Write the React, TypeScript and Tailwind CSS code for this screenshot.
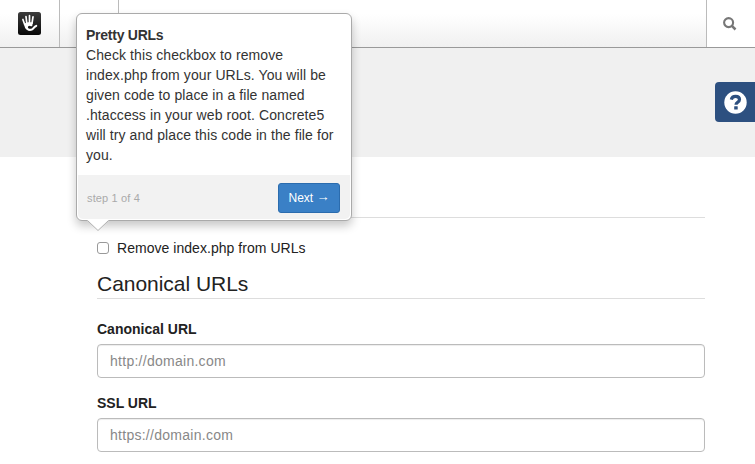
import React from "react";

function HandLogo() {
  return (
    <svg width="23" height="23" viewBox="0 0 23 23" aria-label="Dashboard">
      <defs>
        <linearGradient id="tile" x1="0" y1="0" x2="0" y2="1">
          <stop offset="0" stopColor="#3d3d3d" />
          <stop offset="1" stopColor="#080808" />
        </linearGradient>
      </defs>
      <rect width="23" height="23" rx="2.5" fill="url(#tile)" />
      <g fill="none" stroke="#fff" strokeLinecap="round">
        <path strokeWidth="1.7" d="M4.900 7.500 6.700 12.500M8 4.500l.8 7M11.500 3.700v7.500M15 4.900l-1 6.500" />
        <path
          strokeWidth="2.1"
          d="M13.300 13.200c-2-.9-4.300-.2-4.500 1.700-.1 2.500 2.400 3.500 5 2.600 1.900-.8 2.200-3 4.400-3.600"
        />
      </g>
      <path
        fill="#fff"
        d="M5.900 12c1.900-1.700 6.100-2.100 8.900-1.300l-.7 2.700c-2-.5-4.300-.1-4.700 1.800-.2 1.500.5 2.500 2 3.200-2.500-.2-4.300-1.600-4.700-3.600z"
      />
    </svg>
  );
}

function SearchIcon() {
  return (
    <svg width="14" height="14" viewBox="0 0 14 14" fill="none" stroke="#777" aria-label="Search">
      <circle cx="5.600" cy="5.600" r="4.500" strokeWidth="2.100" />
      <path d="m8.900 8.900 3.600 3.600" strokeWidth="2.500" />
    </svg>
  );
}

function Toolbar() {
  return (
    <header className="flex h-12 border-b border-[#999] bg-linear-to-b from-white from-30% to-[#f0f0f0]">
      <div className="flex w-[60px] justify-center border-r border-[#bbb] pt-3">
        <HandLogo />
      </div>
      <div className="w-[59px] border-r border-[#bbb]" />
      <div className="ml-auto flex w-[49px] border-l border-[#bbb] bg-white pt-[17px] pl-4">
        <SearchIcon />
      </div>
    </header>
  );
}

function HelpButton() {
  return (
    <button className="absolute top-[82px] right-0 flex h-10 w-10 items-center justify-center rounded-l-[4px] bg-[#2d5080]">
      <svg width="23" height="23" viewBox="0 0 23 23" aria-label="Help">
        <circle cx="11.5" cy="11.5" r="11.2" fill="#fff" />
        <path
          d="M7.300 8.600c.5-2.200 2-3.200 4.300-3.200 2.300 0 3.900 1.300 3.900 3.200 0 2.700-3.500 2.700-3.500 5.200"
          fill="none"
          stroke="#2d5080"
          strokeWidth="3.200"
        />
        <rect x="10.200" y="15.200" width="3.500" height="3.300" rx=".3" fill="#2d5080" />
      </svg>
    </button>
  );
}

function Tour() {
  return (
    <div className="absolute top-[13px] left-[76px] w-[276px] rounded-[6px] border border-[#aaa] bg-white shadow-[0_5px_10px_rgba(0,0,0,0.22)]">
      <div className="h-[161px] px-[9px] pt-[11px] text-[14px] leading-5 text-[#333]">
        <strong className="block tracking-[-0.25px]">Pretty URLs</strong>
        <p className="tracking-[0.09px] whitespace-nowrap">
          Check this checkbox to remove
          <br />
          index.php from your URLs. You will be
          <br />
          given code to place in a file named
          <br />
          .htaccess in your web root. Concrete5
          <br />
          will try and place this code in the file for
          <br />
          you.
        </p>
      </div>
      <div className="mx-px mb-px flex h-11 items-center justify-between rounded-b-[5px] bg-[#f2f2f2] pr-[10px] pl-[9px]">
        <span className="mt-[3px] text-[11px] tracking-[0.15px] text-[#aaa]">step 1 of 4</span>
        <button className="mt-[1px] flex h-[30px] w-[62px] items-center justify-center rounded-[3px] border border-[#2b6cae] bg-[#3a80c6] text-[12px] whitespace-nowrap text-white">
          Next&nbsp;<span className="-mt-px text-[13px]">→</span>
        </button>
      </div>
      <svg className="absolute top-[205px] left-[10px]" width="22" height="12" viewBox="0 0 22 12">
        <path d="M0 0h22v1L11 11.500 0 1z" fill="#fff" />
        <path d="M.5 1.500 11 11.500 21.500 1.500" fill="none" stroke="#aaa" strokeWidth=".9" />
      </svg>
    </div>
  );
}

function Field({ label, placeholder }: { label: string; placeholder: string }) {
  return (
    <label className="block">
      <span className="mb-[5px] block h-5 text-[14px] leading-5 font-bold">{label}</span>
      <input
        className="block h-[34px] w-full rounded-[4px] border border-[#bbb] bg-white px-3 text-[14px] tracking-[0.27px] shadow-[inset_0_1px_1px_rgba(0,0,0,0.075)] placeholder:text-[#888]"
        placeholder={placeholder}
      />
    </label>
  );
}

export default function App() {
  return (
    <div className="relative h-[464px] w-[755px] overflow-hidden bg-white font-['Liberation_Sans',Arial,sans-serif] text-[#222]">
      <Toolbar />
      <div className="h-[109px] bg-[#f0f0f0]" />
      <main className="mr-[50px] ml-[97px] pt-[60px]">
        <div className="border-t border-[#ddd]" />
        <label className="mt-5 flex h-5 items-center text-[14px] tracking-[0.04px]">
          <input
            type="checkbox"
            className="mr-2 h-3 w-3 appearance-none rounded-[3px] border border-[#999] bg-white"
          />
          Remove index.php from URLs
        </label>
        <h2 className="mt-[13px] h-[28px] border-b border-[#ddd] text-[21px] leading-[25px] tracking-[-0.03px]">
          Canonical URLs
        </h2>
        <form className="mt-5 flex flex-col gap-[15px]">
          <Field label="Canonical URL" placeholder="http://domain.com" />
          <Field label="SSL URL" placeholder="https://domain.com" />
        </form>
      </main>
      <HelpButton />
      <Tour />
    </div>
  );
}
